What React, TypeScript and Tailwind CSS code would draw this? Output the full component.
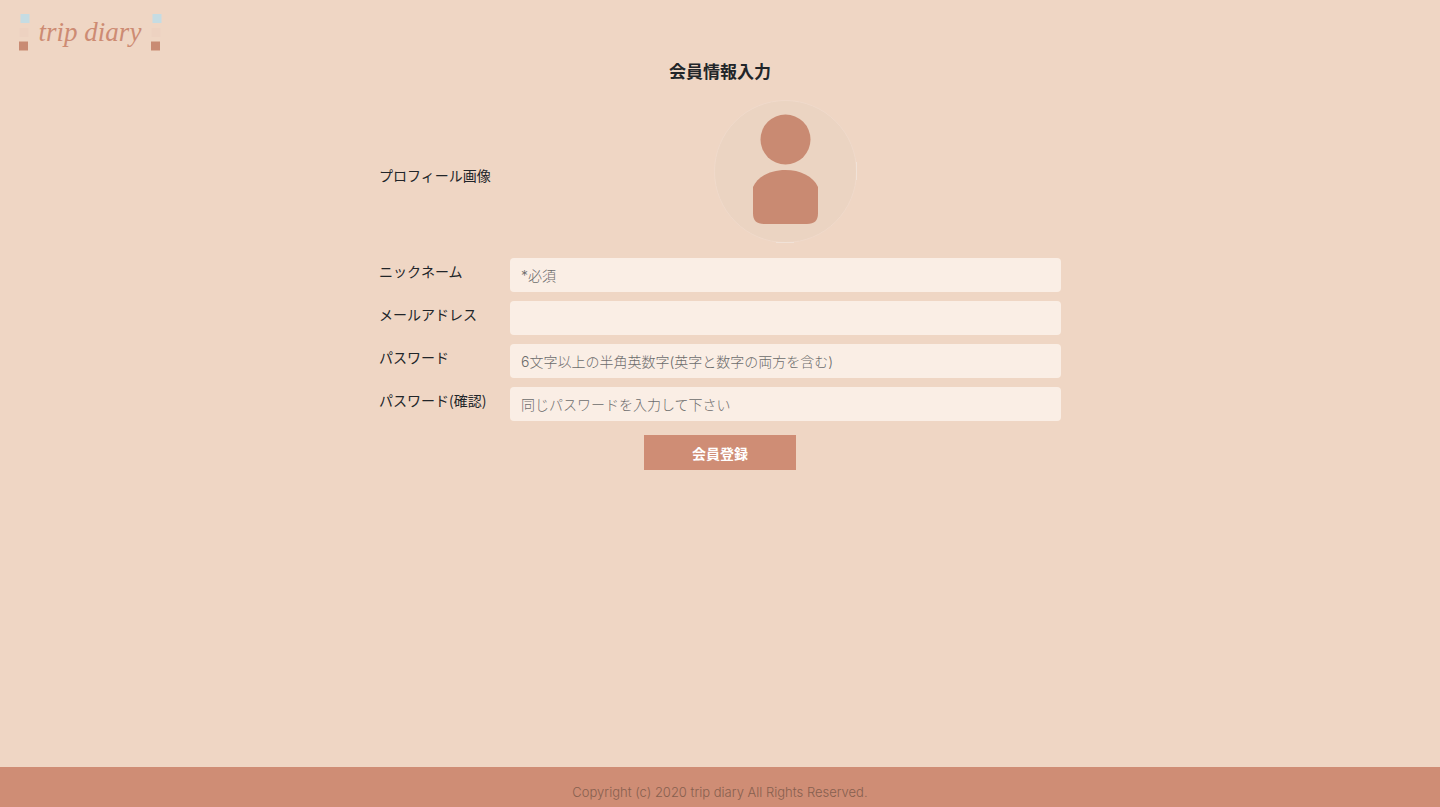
import React from "react";

type Field = {
  id: string;
  label: string;
  type: string;
  placeholder?: string;
};

const fields: Field[] = [
  { id: "nickname", label: "ニックネーム", type: "text", placeholder: "*必須" },
  { id: "email", label: "メールアドレス", type: "email" },
  {
    id: "password",
    label: "パスワード",
    type: "password",
    placeholder: "6文字以上の半角英数字(英字と数字の両方を含む)",
  },
  {
    id: "password-confirmation",
    label: "パスワード(確認)",
    type: "password",
    placeholder: "同じパスワードを入力して下さい",
  },
];

function LogoSquares() {
  return (
    <svg width="12" height="38" viewBox="0 0 12 38" aria-hidden="true">
      <rect x="2.5" y="1" width="9" height="9" fill="#c5dce3" />
      <rect x="1.5" y="15" width="9" height="9" fill="#edd2c1" />
      <rect x="1" y="28.5" width="9" height="9" fill="#c98b73" />
    </svg>
  );
}

function Logo() {
  return (
    <a href="#" className="flex w-36 items-center justify-between text-[#cd8b73]">
      <LogoSquares />
      <span className="font-['Liberation_Serif',cursive] text-[27px] leading-9 italic">trip diary</span>
      <LogoSquares />
    </a>
  );
}

function Avatar() {
  return (
    <svg width="143" height="143" viewBox="0 0 143 143" role="img" aria-labelledby="profile-label">
      <circle cx="71.5" cy="71.5" r="71" fill="#ebd4c2" stroke="#f0dacb" />
      <path d="M142.5 62v18M62 142.5h18" stroke="#f1e2d7" fill="none" />
      <circle cx="71.5" cy="39.5" r="25" fill="#c98a72" />
      <path
        d="M39 87C44 76 57 70 71.5 70S99 76 104 87V113.5Q104 124 93 124H50Q39 124 39 113.5Z"
        fill="#c98a72"
      />
    </svg>
  );
}

export default function App() {
  return (
    <div className="flex min-h-screen flex-col bg-[#efd6c4] font-['Noto_Sans_CJK_JP',sans-serif] text-[#212529]">
      <header className="px-[18px] pt-[13px]">
        <Logo />
      </header>
      <main className="mx-auto w-full max-w-[682px] flex-1">
        <h1 className="pt-[6px] text-center text-[17px] leading-7 font-bold">会員情報入力</h1>
        <form onSubmit={(e) => e.preventDefault()}>
          <div className="grid grid-cols-[131px_1fr] items-center pt-[15px]">
            <span id="profile-label" className="pt-[6px] text-sm">
              プロフィール画像
            </span>
            <div className="flex justify-center">
              <Avatar />
            </div>
          </div>
          <div className="flex flex-col gap-[9px] pt-[15px]">
            {fields.map((f) => (
              <div key={f.id} className="grid grid-cols-[131px_1fr] items-start">
                <label htmlFor={f.id} className="text-sm leading-[26px]">
                  {f.label}
                </label>
                <input
                  id={f.id}
                  type={f.type}
                  placeholder={f.placeholder}
                  className="h-[34px] w-full rounded bg-[#faeee5] px-[11px] font-[Inter,'Noto_Sans_CJK_JP',sans-serif] text-sm font-light outline-none placeholder:text-[#6c6c6c]"
                />
              </div>
            ))}
          </div>
          <div className="flex justify-center pt-[14px]">
            <button type="submit" className="h-[35px] w-[152px] bg-[#cf8d75] text-sm font-bold text-white">
              会員登録
            </button>
          </div>
        </form>
      </main>
      <footer className="bg-[#cf8d75] pt-[15px] pb-[5px] text-center font-[Inter,sans-serif] text-[13px] leading-5 font-light text-[#87604f]">
        Copyright (c) 2020 trip diary All Rights Reserved.
      </footer>
    </div>
  );
}
